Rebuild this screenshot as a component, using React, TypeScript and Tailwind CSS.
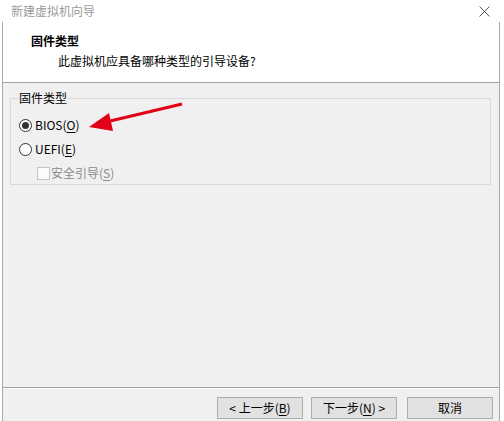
export default function App() {
  return (
    <div
      className="relative w-[504px] h-[421px] overflow-hidden bg-white text-[12px] leading-[16px] text-black"
      style={{ fontFamily: '"Noto Sans CJK SC", "Microsoft YaHei", sans-serif' }}
    >
      {/* title bar */}
      <div className="flex h-[22px] items-center justify-between pl-[11px] pr-[14px]">
        <span className="text-[#9a9a9a]">新建虚拟机向导</span>
        <svg width="11" height="11" viewBox="0 0 11 11" className="text-[#555]">
          <path d="M0.5 0.5 L10.5 10.5 M10.5 0.5 L0.5 10.5" stroke="currentColor" strokeWidth="1" />
        </svg>
      </div>

      <div className="ml-[2px] flex w-[498px] flex-col border-x border-[#aaaaaa]">
        {/* header */}
        <div className="flex h-[61px] flex-col border-b border-[#a0a0a0] bg-white pt-[11px]">
          <div className="pl-[28px] font-bold">固件类型</div>
          <div className="mt-[4px] pl-[55px]">此虚拟机应具备哪种类型的引导设备?</div>
        </div>

        {/* body */}
        <div className="h-[305px] border-b border-[#a0a0a0] bg-[#f0f0f0] pt-[7px]">
          <fieldset className="ml-[7px] h-[95px] w-[481px] border border-[#d9d9d9] px-[7px]">
            <legend className="px-[1px]">固件类型</legend>
            <div className="mt-[7px] flex flex-col">
              <div className="flex h-[24px] items-center">
                <span className="ml-[1px] flex h-[13px] w-[13px] items-center justify-center rounded-full border border-[#333] bg-white">
                  <span className="h-[7px] w-[7px] rounded-full bg-[#333]" />
                </span>
                <span className="ml-[3px]">
                  BIOS(<u className="underline-offset-2">O</u>)
                </span>
              </div>
              <div className="flex h-[24px] items-center">
                <span className="ml-[1px] h-[13px] w-[13px] rounded-full border border-[#333] bg-white" />
                <span className="ml-[3px]">
                  UEFI(<u className="underline-offset-2">E</u>)
                </span>
              </div>
              <div className="flex h-[24px] items-center text-[#8a8a8a]">
                <span className="ml-[19px] h-[13px] w-[13px] border border-[#c4c4c4] bg-[#fbfbfb]" />
                <span className="ml-[1px]">
                  安全引导(<u className="underline-offset-2">S</u>)
                </span>
              </div>
            </div>
          </fieldset>
        </div>

        {/* footer */}
        <div className="flex h-[34px] items-start justify-end border-t border-white bg-[#f0f0f0] pr-[6px] pt-[8px]">
          <button className="h-[22px] w-[86px] border border-[#adadad] bg-[#e1e1e1]">
            &lt; 上一步(<u className="underline-offset-2">B</u>)
          </button>
          <button className="ml-[8px] h-[22px] w-[86px] border border-[#adadad] bg-[#e1e1e1]">
            下一步(<u className="underline-offset-2">N</u>) &gt;
          </button>
          <button className="ml-[10px] h-[22px] w-[86px] border border-[#adadad] bg-[#e1e1e1]">
            取消
          </button>
        </div>
      </div>

      {/* annotation arrow */}
      <svg className="absolute left-0 top-0" width="504" height="421" viewBox="0 0 504 421">
        <line x1="182" y1="104" x2="106" y2="122" stroke="#e10016" strokeWidth="3" />
        <polygon points="89,127 109,113 113,131" fill="#e10016" />
      </svg>
    </div>
  );
}
